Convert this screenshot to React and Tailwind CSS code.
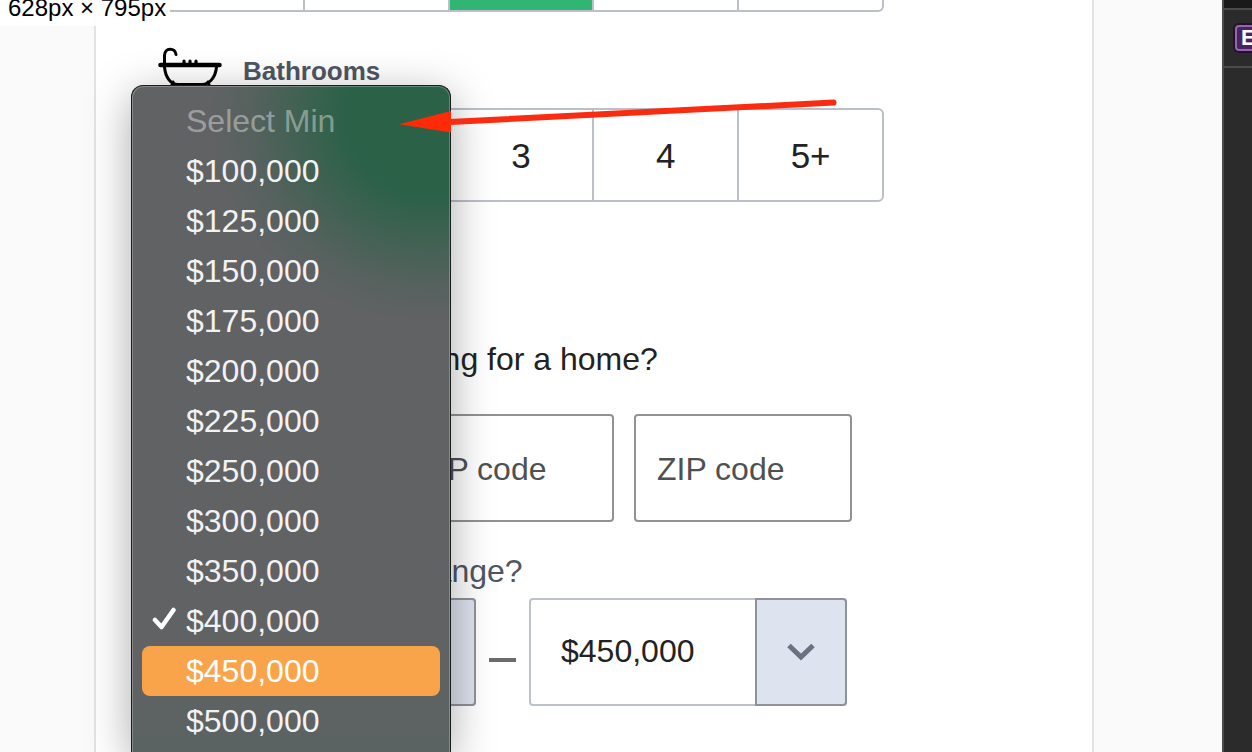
import { useState } from "react";

const minPrices = [
  "$100,000",
  "$125,000",
  "$150,000",
  "$175,000",
  "$200,000",
  "$225,000",
  "$250,000",
  "$300,000",
  "$350,000",
  "$400,000",
  "$450,000",
  "$500,000",
];

function BathtubIcon() {
  return (
    <svg width="64" height="50" viewBox="0 0 64 50" fill="none" stroke="#000" strokeLinecap="round" aria-hidden="true">
      <path d="M6.500 19V9.500c0-8.500 11-8 11.500-1" strokeWidth="3" />
      <path d="M2.500 19H61.500" strokeWidth="4.500" />
      <path d="M26 17v-1.800M32 17v-1.800M38 17v-1.800" strokeWidth="3.200" />
      <path d="M6.500 21C7.500 32 13 38.500 20 38.500H44C51 38.500 57.500 32 58.500 21" strokeWidth="3" />
      <path d="M15 36l-2.500 7M50 36l2.500 7" strokeWidth="3" />
    </svg>
  );
}

function RoomButtons({ label, value, onChange, short }) {
  return (
    <div
      role="group"
      aria-label={label}
      className={
        "flex w-[726px] border-2 border-[#bbbfc9] divide-x-2 divide-[#bbbfc9] bg-white overflow-hidden " +
        (short ? "h-3 rounded-b-md border-t-0" : "h-[94px] rounded-md")
      }
    >
      {["1", "2", "3", "4", "5+"].map((n) => (
        <button
          key={n}
          type="button"
          aria-label={`${n} ${label}`}
          aria-pressed={value === n}
          onClick={() => onChange(n)}
          className={"flex-1 pt-0.5 text-[35px] text-[#222] " + (value === n ? "bg-[#30b573]" : "")}
        >
          {short ? null : n}
        </button>
      ))}
    </div>
  );
}

function PriceSelect({ label, value, onChange }) {
  return (
    <div className="relative flex h-[108px] w-[318px]">
      <select
        aria-label={label}
        value={value}
        onChange={(e) => onChange(e.target.value)}
        className="w-full appearance-none rounded border-2 border-[#bcc1ca] bg-white pb-0.5 pl-[30px] text-[32px] text-[#222]"
      >
        {minPrices.map((p) => (
          <option key={p}>{p}</option>
        ))}
      </select>
      <span className="pointer-events-none absolute inset-y-0 right-0 flex w-[92px] items-center justify-center rounded-r border-2 border-[#8f9299] bg-[#dde3ef]">
        <svg width="28" height="18" viewBox="0 0 28 18" fill="none" stroke="#6b7180" strokeWidth="5" aria-hidden="true">
          <path d="M2 2.500L14 14L26 2.500" />
        </svg>
      </span>
    </div>
  );
}

function PriceMenu({ selected, highlighted, onPick }) {
  return (
    <div className="absolute bottom-0 left-[131px] top-[85px] w-[320px] overflow-hidden rounded-t-xl border border-b-0 border-[#18201d] bg-[#616264] bg-[radial-gradient(ellipse_225px_210px_at_300px_30px,#2a6147_0%,#2b6148_38%,#2f614999_62%,#2f614933_82%,transparent_100%),linear-gradient(to_top,#5a6361,transparent_90px)] text-[32px] text-[#f2f2f3] shadow-[0_10px_44px_rgba(0,0,0,0.34)]">
      <ul role="listbox" aria-label="Minimum price" className="h-full rounded-t-xl border border-b-0 border-white/25 px-[9px] pt-[9px]">
        <li role="option" aria-disabled="true" aria-selected="false" className="h-[50px] pl-11 leading-[50px] text-white/40">
          Select Min
        </li>
        {minPrices.map((p) => (
          <li
            key={p}
            role="option"
            aria-selected={p === selected}
            onClick={() => onPick(p)}
            className={
              "flex h-[50px] items-center rounded-lg leading-[50px] " + (p === highlighted ? "bg-[#f9a44a] text-white" : "")
            }
          >
            <span className="flex w-11 justify-center pb-1">
              {p === selected && (
                <svg width="24" height="24" viewBox="0 0 24 24" fill="none" stroke="#fff" strokeWidth="4.500" strokeLinecap="round" strokeLinejoin="round" aria-hidden="true">
                  <path d="M3 13L9.500 20L21.500 3" />
                </svg>
              )}
            </span>
            {p}
          </li>
        ))}
      </ul>
    </div>
  );
}

export default function App() {
  const [beds, setBeds] = useState("3");
  const [baths, setBaths] = useState("");
  const [min, setMin] = useState("$400,000");
  const [max, setMax] = useState("$450,000");

  return (
    <div className="relative flex h-screen overflow-hidden bg-[#fafafa] font-['Liberation_Sans',Arial,sans-serif] text-[#222]">
      <main className="flex min-w-0 flex-1 justify-center pr-[34px]">
        <form className="w-full max-w-[1000px] border-x-2 border-[#e3e3e4] bg-white pl-[62px]">
          <RoomButtons label="Bedrooms" value={beds} onChange={setBeds} short />
          <h2 className="mb-3 mt-[34px] flex h-[50px] items-center gap-[21px] text-[26px] font-bold text-[#505563]">
            <BathtubIcon />
            Bathrooms
          </h2>
          <RoomButtons label="Bathrooms" value={baths} onChange={setBaths} />

          <h2 className="mt-[137px] text-[32px] leading-10">Where are you looking for a home?</h2>
          <div className="mt-[35px] flex gap-5">
            {[1, 2, 3].map((n) => (
              <input
                key={n}
                aria-label={`ZIP code ${n}`}
                placeholder="ZIP code"
                className="h-[108px] w-[218px] rounded border-2 border-[#929292] bg-white px-[21px] pt-0.5 text-[32px] placeholder:text-[#505050]"
              />
            ))}
          </div>

          <h2 className="mt-[29px] text-[32px] leading-10 text-[#505563]">What is your price range?</h2>
          <div className="mt-[7px] flex items-center">
            <PriceSelect label="Minimum price" value={min} onChange={setMin} />
            <span className="mx-[13px] mt-4 h-1 w-[27px] bg-[#6c6c6c]" />
            <PriceSelect label="Maximum price" value={max} onChange={setMax} />
          </div>
        </form>
      </main>

      <aside className="w-[30px] shrink-0 overflow-hidden border-l-2 border-[#4b4b4b] bg-[#2b2b2b]">
        <div className="h-2 bg-[#1a1a1a]" />
        <div className="flex h-[60px] items-center border-y-2 border-[#4b4b4b] pl-[9px]">
          <span className="h-[30px] shrink-0 rounded-md border-2 border-[#25102f] bg-[#25102f]">
            <span className="block h-[26px] rounded border-2 border-[#9566ab] bg-[#4a2460] pl-1 pr-2 text-[22px] font-bold leading-[22px] text-white">
              E
            </span>
          </span>
        </div>
      </aside>

      <PriceMenu selected={min} highlighted="$450,000" onPick={setMin} />

      <svg className="pointer-events-none absolute left-[396px] top-[96px]" width="444" height="40" viewBox="396 96 444 40" aria-hidden="true">
        <path d="M445 122.300L833.500 102.500" stroke="#f92b10" strokeWidth="6" strokeLinecap="round" />
        <path d="M399 124.300L451 111V132.500Z" fill="#ff2a08" />
      </svg>

      <div className="absolute left-0 top-0 h-[26px] w-[170px] bg-white/90 pl-2 text-2xl leading-4 text-black">628px × 795px</div>
    </div>
  );
}
